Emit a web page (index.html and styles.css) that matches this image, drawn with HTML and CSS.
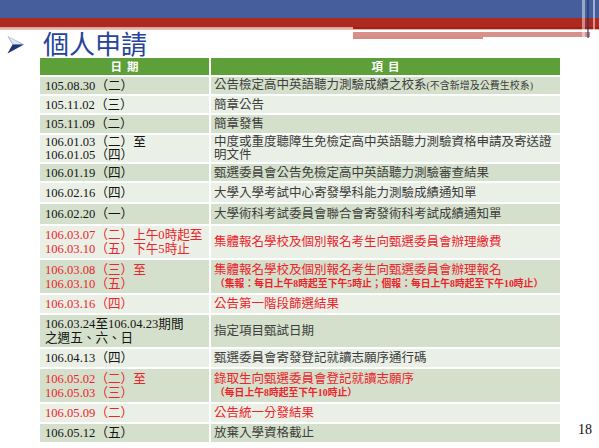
FILE: index.html
```html
<!DOCTYPE html>
<html lang="zh-Hant">
<head>
<meta charset="utf-8">
<title>個人申請</title>
<link rel="stylesheet" href="styles.css">
</head>
<body>
<div class="page">
  <header class="top">
    <div class="band-blue"></div>
    <div class="band-red"></div>
    <div class="deco">
      <div class="deco-left"></div>
      <div class="deco-right">
        <div class="dr-red"></div>
        <div class="dr-pink"></div>
        <div class="dr-gap"></div>
        <div class="dr-block"></div>
        <div class="dr-low"></div>
      </div>
    </div>
    <div class="vstrips"><i class="vs1"></i><i class="vs2"></i><i class="vs3"></i></div>
  </header>

  <div class="title-row">
    <svg class="arrow" width="18" height="19" viewBox="0 0 18 19">
      <polygon points="0.5,1 17,9.5 5.5,9.5" fill="#7f95c8"/>
      <polygon points="1.5,1.5 15,9.2 6,9.2" fill="#dfe5f2"/>
      <polygon points="5.5,9.5 17,9.5 0.5,18.5" fill="#1f3474"/>
    </svg>
    <h1 class="title">個人申請</h1>
  </div>

  <div class="main">
    <div class="sched">
      <div class="row head"><div class="c date"><span>日&nbsp;&nbsp;期</span></div><div class="c item"><span>項&nbsp;&nbsp;目</span></div></div>

      <div class="row dk"><div class="c date"><span>105.08.30（二）</span></div><div class="c item"><span>公告檢定高中英語聽力測驗成績之校系<span class="note">(不含新增及公費生校系)</span></span></div></div>
      <div class="row lt"><div class="c date"><span>105.11.02（三）</span></div><div class="c item"><span>簡章公告</span></div></div>
      <div class="row dk"><div class="c date"><span>105.11.09（二）</span></div><div class="c item"><span>簡章發售</span></div></div>
      <div class="row lt tight"><div class="c date"><span>106.01.03（二）至</span><span>106.01.05（四）</span></div><div class="c item"><span>中度或重度聽障生免檢定高中英語聽力測驗資格申請及寄送證</span><span>明文件</span></div></div>
      <div class="row dk"><div class="c date"><span>106.01.19（四）</span></div><div class="c item"><span>甄選委員會公告免檢定高中英語聽力測驗審查結果</span></div></div>
      <div class="row lt"><div class="c date"><span>106.02.16（四）</span></div><div class="c item"><span>大學入學考試中心寄發學科能力測驗成績通知單</span></div></div>
      <div class="row dk"><div class="c date"><span>106.02.20（一）</span></div><div class="c item"><span>大學術科考試委員會聯合會寄發術科考試成績通知單</span></div></div>
      <div class="row lt red"><div class="c date"><span>106.03.07（二）上午0時起至</span><span>106.03.10（五）下午5時止</span></div><div class="c item"><span>集體報名學校及個別報名考生向甄選委員會辦理繳費</span></div></div>
      <div class="row dk red"><div class="c date"><span>106.03.08（三）至</span><span>106.03.10（五）</span></div><div class="c item"><span>集體報名學校及個別報名考生向甄選委員會辦理報名</span><span class="sub">（集報：每日上午8時起至下午5時止；個報：每日上午8時起至下午10時止）</span></div></div>
      <div class="row lt red"><div class="c date"><span>106.03.16（四）</span></div><div class="c item"><span>公告第一階段篩選結果</span></div></div>
      <div class="row dk"><div class="c date"><span>106.03.24至106.04.23期間</span><span>之週五、六、日</span></div><div class="c item"><span>指定項目甄試日期</span></div></div>
      <div class="row lt"><div class="c date"><span>106.04.13（四）</span></div><div class="c item"><span>甄選委員會寄發登記就讀志願序通行碼</span></div></div>
      <div class="row dk red"><div class="c date"><span>106.05.02（二）至</span><span>106.05.03（三）</span></div><div class="c item"><span>錄取生向甄選委員會登記就讀志願序</span><span class="sub">（每日上午8時起至下午10時止）</span></div></div>
      <div class="row lt red"><div class="c date"><span>106.05.09（二）</span></div><div class="c item"><span>公告統一分發結果</span></div></div>
      <div class="row dk"><div class="c date"><span>106.05.12（五）</span></div><div class="c item"><span>放棄入學資格截止</span></div></div>
    </div>
    <div class="pnum">18</div>
  </div>
</div>
</body>
</html>
```

FILE: styles.css
```css
* { box-sizing: border-box; }
html, body { margin: 0; padding: 0; background: #ffffff; }
.page {
  width: 599px;
  height: 448px;
  position: relative;
  overflow: hidden;
  background: #ffffff;
  font-family: "Liberation Serif", "Noto Sans CJK TC", serif;
  text-spacing-trim: space-all;
}

/* top bands */
.top { position: relative; }
.band-blue { height: 18px; background: #465f9c; }
.band-red { height: 9px; background: #ae2a20; }
.deco {
  position: absolute;
  left: 0; right: 0; top: 27px;
  display: flex;
}
.deco-left { flex: 0 0 353px; height: 3px; background: linear-gradient(#dc9a92, #f0c8c3); }
.deco-right { flex: 1; display: flex; flex-direction: column; }
.dr-red { height: 2px; background: #9f2219; }
.dr-pink { height: 1px; background: #e6b3ad; }
.dr-gap { height: 2px; background: #ffffff; margin-right: 44px; }
.dr-block { height: 5px; background: #d8918a; margin-right: 9px; }
.dr-low { height: 2px; background: #d48c85; margin-right: 116px; }
.vstrips {
  position: absolute;
  top: 0; left: 582px;
  height: 38px;
  display: flex;
  gap: 2px;
}
.vstrips i { display: block; height: 100%; }
.vs1 { width: 3px; background: rgba(255,255,255,0.45); }
.vs2 { width: 2px; background: rgba(30,50,110,0.55); }
.vs3 { width: 2px; background: rgba(255,255,255,0.5); margin-left: 2px; }

/* title */
.title-row {
  height: 31px;
  display: flex;
  align-items: center;
  padding-left: 7px;
  gap: 18px;
}
.arrow { display: block; margin-top: 4px; }
.title {
  margin: 0;
  font-family: "Noto Sans CJK TC", sans-serif;
  font-weight: 400;
  font-size: 26px;
  line-height: 31px;
  color: #25449a;
}

/* schedule table */
.main { display: flex; padding-left: 40px; }
.sched {
  width: 520px;
  display: grid;
  grid-template-columns: 169px 349px;
  grid-template-rows: 17px 17px 17px 18px 27px 17px 19px 20px 32px 33px 18px 32px 18px 33px 18px 18px;
  column-gap: 2px;
  row-gap: 2px;
}
.row { display: contents; }
.c {
  display: flex;
  flex-direction: column;
  justify-content: center;
  line-height: 14px;
  white-space: nowrap;
  overflow: hidden;
}
.date { padding-left: 5px; font-size: 12.6px; color: #141414; }
.item { padding-left: 3px; font-size: 12.5px; color: #3d3d3d; }
.dk .c { background: #d4e0cb; }
.lt .c { background: #eaf0e6; }
.head .c {
  background: #5d9f38;
  color: #ffffff;
  font-family: "Noto Sans CJK TC", sans-serif;
  font-weight: 700;
  font-size: 11.5px;
  line-height: 13px;
  align-items: center;
  padding-left: 0;
}
.tight .c { line-height: 12.5px; }
.red .c { color: #ee232b; }
.note { font-size: 10px; }
.sub {
  font-size: 9.8px;
  font-weight: 700;
  line-height: 14px;
  padding-left: 1px;
}

.pnum {
  align-self: flex-end;
  margin-left: 18px;
  margin-bottom: 5px;
  font-size: 14px;
  line-height: 14px;
  color: #111111;
}
```
